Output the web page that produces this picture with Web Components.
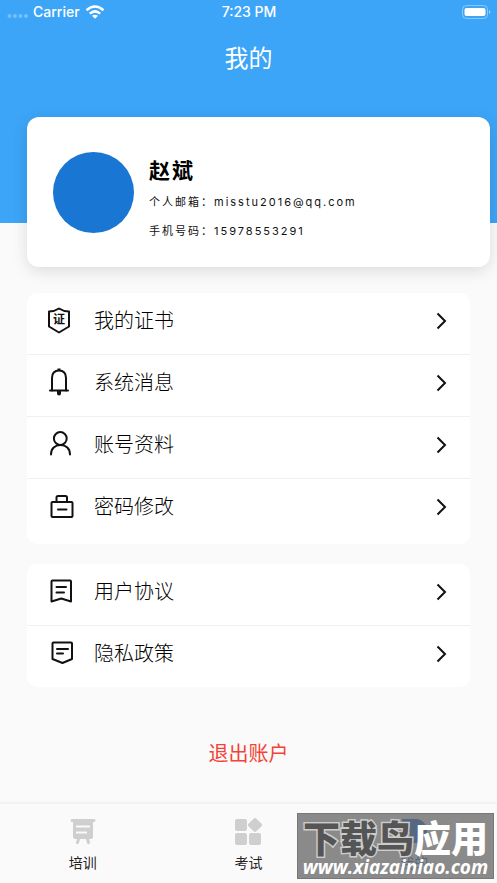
<!DOCTYPE html>
<html lang="zh-CN">
<head>
<meta charset="utf-8">
<meta name="viewport" content="width=device-width, initial-scale=1">
<title>我的</title>
<style>
  body {
    margin: 0;
    background: #fafafa;
    color: #222;
    font-family: Inter, "Noto Sans CJK SC", sans-serif;
  }
</style>
</head>
<body>
<profile-page></profile-page>

<script>
class BaseElement extends HTMLElement {
  constructor() {
    super();
    this.attachShadow({ mode: "open" });
  }
  render(html) {
    const t = document.createElement("template");
    t.innerHTML = html;
    this.shadowRoot.replaceChildren(t.content.cloneNode(true));
  }
}

const LINE = 'fill="none" stroke="#111" stroke-width="2" stroke-linejoin="round" stroke-linecap="round"';
const ICONS = {
  certificate: `<path ${LINE} d="M13 1.500 C10 3.500 6 4.500 3 4.500 V19.500 L13 25.500 L23 19.500 V4.500 C20 4.500 16 3.500 13 1.500Z"/>
    <text x="13" y="17" text-anchor="middle" font-size="12" font-weight="700" fill="#111">证</text>`,
  bell: `<g ${LINE}><path d="M6 21.500 V9 C6 4 9 1.500 13 1.500 S20 4 20 9 V21.500"/><path d="M4 21.500 H22"/></g>
    <path d="M11.500 -.5h3v2h-3zM11 22h4v2.500a2 2 0 0 1-4 0z" fill="#111"/>`,
  user: `<g ${LINE}><circle cx="14.300" cy="7.500" r="6.400"/><path d="M5 23.500 C5 17.500 9 14 14.500 14 S24 17.500 24 23.500"/></g>`,
  lock: `<g ${LINE}><rect x="5.500" y="9" width="21" height="15" rx="1"/><path d="M10.500 9 V4.500 Q10.500 3 12 3 H19.500 Q21 3 21 4.500 V9 M12 16.500 H20.500"/></g>`,
  agreement: `<g ${LINE}><path d="M5.500 23.500 V3.500 Q5.500 2.500 6.500 2.500 H24 Q25 2.500 25 3.500 V23.500 L15.300 20.500 Z"/><path d="M10.500 9 H20 M10.500 14.500 H18"/></g>`,
  policy: `<g ${LINE}><path d="M6.500 19 V3.500 Q6.500 2.500 7.500 2.500 H25 Q26 2.500 26 3.500 V19 L16.500 23 Z"/><path d="M11 9 H22 M11 13.500 H17"/></g>`,
  training: `<path fill="#cfcfcf" d="M3 2h22a1 1 0 0 1 0 3h-1v15a2 2 0 0 1-2 2h-2l1 3a1 1 0 0 1-3 1l-1-4h-6l-1 4a1 1 0 0 1-3-1l1-3h-2a2 2 0 0 1-2-2v-15h-1a1 1 0 0 1 0-3z"/>
    <path stroke="#fafafa" stroke-width="2" d="M7 9.500h14M7 15.500h11"/>`,
  exam: `<g fill="#cfcfcf"><rect x="0" y="2" width="12" height="12" rx="2"/><rect x="0" y="16" width="12" height="12" rx="2"/><rect x="14" y="16" width="12" height="12" rx="2"/><rect x="14.500" y="2.500" width="11" height="11" rx="2" transform="rotate(45 20 8)"/></g>`,
  mine: `<path fill="#3273d8" d="M2 2 H16 A11 12 0 0 1 16 26 H10 V15 H2Z"/>`
};

customElements.define("app-icon", class extends BaseElement {
  connectedCallback() {
    this.render(`<style>:host{display:block;width:28px;height:28px;flex:none}svg{display:block;overflow:visible}</style>
      <svg width="28" height="28" viewBox="0 0 28 28" aria-hidden="true">${ICONS[this.getAttribute("name")]}</svg>`);
  }
});

customElements.define("status-bar", class extends BaseElement {
  connectedCallback() {
    this.render(`<style>
      :host{display:grid;grid-template-columns:1fr auto 1fr;align-items:center;height:24px;padding:0 6px 0 7px;color:#fff;font-size:14px;line-height:24px;font-weight:500}
      .left{display:flex;align-items:center;gap:5px}
      svg{display:block}
      .battery{justify-self:end}
      </style>
      <div class="left">
        <svg width="21" height="12" viewBox="0 0 21 12" fill="#fff" fill-opacity=".3"><circle cx="2.500" cy="10" r="2"/><circle cx="8" cy="10" r="2"/><circle cx="13.500" cy="10" r="2"/><circle cx="19" cy="10" r="2"/></svg>
        <span>Carrier</span>
        <svg width="20" height="14" viewBox="0 0 20 14" fill="none" stroke="#fff" stroke-width="2.500"><path d="M1.500 5.200 Q10 -2.200 18.500 5.200M4.800 8.600 Q10 4.200 15.200 8.600"/><path d="M7 10.800 Q10 8.600 13 10.800 L10 13.800Z" fill="#fff" stroke="none"/></svg>
      </div>
      <span>7:23 PM</span>
      <svg class="battery" width="30" height="14" viewBox="0 0 30 14"><rect x="1.500" y=".5" width="25" height="13" rx="4" fill="none" stroke="#fff" stroke-opacity=".4"/><rect x="3.500" y="3" width="21" height="8" rx="2" fill="#fff"/><path d="M28 5 Q31 7 28 9Z" fill="#fff" fill-opacity=".5"/></svg>`);
  }
});

customElements.define("page-header", class extends BaseElement {
  connectedCallback() {
    this.render(`<style>
      :host{display:flow-root;height:223px;background:#3ca5f8;color:#fff}
      h1{margin:17px 0 0;font-size:24px;line-height:36px;font-weight:400;text-align:center}
      </style><status-bar></status-bar><h1><slot></slot></h1>`);
  }
});

customElements.define("profile-card", class extends BaseElement {
  connectedCallback() {
    this.render(`<style>
      :host{display:flex;align-items:center;gap:15px;box-sizing:border-box;min-height:150px;margin:-106px 7px 0 27px;padding:0 26px;background:#fff;border-radius:12px;box-shadow:0 4px 16px rgba(0,0,0,.12);position:relative}
      .avatar{width:81px;height:81px;border-radius:50%;background:#1976d2;flex:none}
      h2{margin:0;font-size:21px;line-height:34px;font-weight:700;letter-spacing:2px;color:#000}
      p{margin:0;font-size:11px;line-height:29px;letter-spacing:2px;color:#111}
      .info{padding-top:15px}
      </style>
      <div class="avatar"></div>
      <div class="info"><h2><slot name="name"></slot></h2><p><slot name="email"></slot></p><p><slot name="phone"></slot></p></div>`);
  }
});

customElements.define("menu-group", class extends BaseElement {
  connectedCallback() {
    this.render(`<style>
      :host{display:block;margin:0 27px;background:#fff;border-radius:10px;overflow:hidden}
      ::slotted(menu-item:not(:last-child)){border-bottom:1px solid #f0f0f0}
      </style><slot></slot>`);
  }
});

customElements.define("menu-item", class extends BaseElement {
  connectedCallback() {
    this.render(`<style>
      :host{display:block}
      button{display:flex;align-items:center;gap:20px;box-sizing:border-box;width:100%;height:61px;margin:0;padding:0 23px 5px 19px;border:0;background:none;color:#000;font:300 20px/30px Inter,"Noto Sans CJK SC",sans-serif;text-align:left;cursor:pointer}
      span{flex:1}
      </style>
      <button type="button"><app-icon name="${this.getAttribute("icon")}"></app-icon><span><slot></slot></span>
      <svg width="11" height="18" viewBox="0 0 11 18" fill="none" stroke="#111" stroke-width="2" aria-hidden="true"><path d="M1.500 1.500 L9 9 L1.500 16.500"/></svg></button>`);
  }
});

customElements.define("tab-item", class extends BaseElement {
  connectedCallback() {
    const active = this.hasAttribute("active");
    this.render(`<style>
      :host{display:block;flex:1}
      a{display:flex;flex-direction:column;align-items:center;gap:8px;padding-top:13px;font-size:14px;line-height:20px;color:${active ? "#3273d8" : "#222"};text-decoration:none}
      </style>
      <a href="#${this.getAttribute("icon")}"><app-icon name="${this.getAttribute("icon")}"></app-icon><slot></slot></a>`);
  }
});

customElements.define("tab-bar", class extends BaseElement {
  connectedCallback() {
    this.render(`<style>
      :host{display:flex;box-sizing:border-box;min-height:81px;border-top:2px solid #f2f2f2;background:#fafafa}
      </style><slot></slot>`);
  }
});

customElements.define("site-mark", class extends BaseElement {
  connectedCallback() {
    this.render(`<style>
      :host{position:absolute;right:3px;bottom:4px;box-sizing:border-box;width:197px;height:66px;padding-top:2px;background:rgba(98,98,98,.74);border:1px solid #777;color:#fff;text-align:center;white-space:nowrap}
      .name{font:900 37px/42px "Noto Sans CJK SC",sans-serif}
      .dark{color:#555;-webkit-text-stroke:3px #ccc;paint-order:stroke fill}
      .url{font:italic 700 19px/18px "Open Sans",sans-serif}
      </style>
      <div class="name"><span class="dark">下载鸟</span>应用</div><div class="url">www.xiazainiao.com</div>`);
  }
});

customElements.define("profile-page", class extends BaseElement {
  connectedCallback() {
    this.render(`<style>
      :host{display:flex;flex-direction:column;min-height:100vh;position:relative}
      main{flex:1;display:flex;flex-direction:column}
      .first{margin-top:26px;padding-bottom:4px}
      .second{margin-top:20px}
      .logout{align-self:center;margin:52px 0 28px;padding:0;border:0;background:none;color:#f44336;font:400 20px/30px Inter,"Noto Sans CJK SC",sans-serif;cursor:pointer}
      </style>
      <page-header>我的</page-header>
      <main>
        <profile-card>
          <span slot="name">赵斌</span>
          <span slot="email">个人邮箱：misstu2016@qq.com</span>
          <span slot="phone">手机号码：15978553291</span>
        </profile-card>
        <menu-group class="first">
          <menu-item icon="certificate">我的证书</menu-item>
          <menu-item icon="bell">系统消息</menu-item>
          <menu-item icon="user">账号资料</menu-item>
          <menu-item icon="lock">密码修改</menu-item>
        </menu-group>
        <menu-group class="second">
          <menu-item icon="agreement">用户协议</menu-item>
          <menu-item icon="policy">隐私政策</menu-item>
        </menu-group>
        <button class="logout" type="button">退出账户</button>
      </main>
      <tab-bar>
        <tab-item icon="training">培训</tab-item>
        <tab-item icon="exam">考试</tab-item>
        <tab-item icon="mine" active>我的</tab-item>
      </tab-bar>
      <site-mark></site-mark>`);
  }
});
</script>
</body>
</html>
